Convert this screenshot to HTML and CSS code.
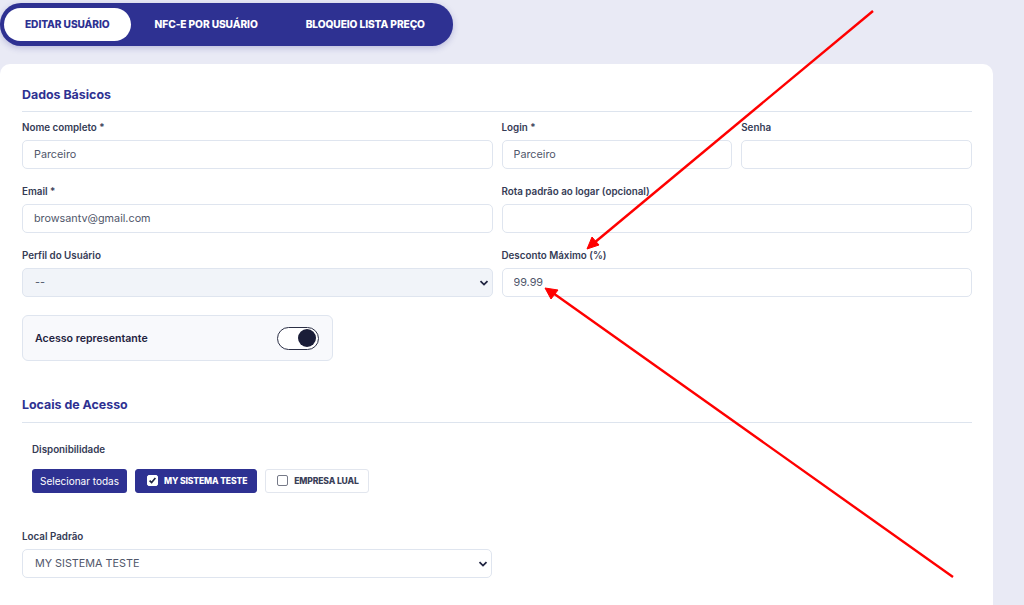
FILE: index.html
```html
<!DOCTYPE html><html lang="pt-BR">
<head>
	<meta charset="utf-8">
	<title>Editar usuário</title>
	<meta name="viewport" content="width=device-width, initial-scale=1.0">
<link rel="stylesheet" href="styles.css">
</head>
<body>
<div class="page">

<div class="tabs">
	<button class="tab active">Editar Usuário</button>
	<button class="tab">NFC-e por usuário</button>
	<button class="tab">Bloqueio lista preço</button>
</div>

<div class="card">
	<h3 class="section">Dados Básicos</h3>

	<div class="grid">
		<div class="field">
			<label>Nome completo *</label>
			<input type="text" value="Parceiro">
		</div>
		<div class="pair">
			<div class="field">
				<label>Login *</label>
				<input type="text" value="Parceiro">
			</div>
			<div class="field">
				<label>Senha</label>
				<input type="password" value="">
			</div>
		</div>

		<div class="field">
			<label>Email *</label>
			<input type="text" value="browsantv@gmail.com">
		</div>
		<div class="field">
			<label>Rota padrão ao logar (opcional)</label>
			<input type="text" value="">
		</div>

		<div class="field">
			<label>Perfil do Usuário</label>
			<div class="select grey">
				<select><option>--</option></select>
				<svg class="chev" width="10" height="8" viewBox="0 0 10 8"><path d="M1.5 2.2 5 5.6 8.5 2.2" fill="none" stroke="#1f2340" stroke-width="1.8"/></svg>
			</div>
		</div>
		<div class="field">
			<label>Desconto Máximo (%)</label>
			<input type="text" value="99.99">
		</div>
	</div>

	<div class="switchbox">
		<span>Acesso representante</span>
		<span class="switch"><span class="knob"></span></span>
	</div>

	<h3 class="section second">Locais de Acesso</h3>

	<div class="locais">
		<label>Disponibilidade</label>
		<div class="chips">
			<button class="btn">Selecionar todas</button>
			<span class="chip on"><span class="box">
				<svg width="9" height="9" viewBox="0 0 9 9"><path d="M1.6 4.6 3.6 6.6 7.4 2" fill="none" stroke="#1f2340" stroke-width="1.6"/></svg>
			</span>MY SISTEMA TESTE</span>
			<span class="chip"><span class="box"></span>EMPRESA LUAL</span>
		</div>
	</div>

	<div class="field half">
		<label>Local Padrão</label>
		<div class="select">
			<select><option>MY SISTEMA TESTE</option></select>
			<svg class="chev" width="10" height="8" viewBox="0 0 10 8"><path d="M1.5 2.2 5 5.6 8.5 2.2" fill="none" stroke="#1f2340" stroke-width="1.8"/></svg>
		</div>
	</div>
</div>

</div>

<!-- setas de destaque sobre o campo de desconto -->
<svg class="marks" width="1024" height="605" viewBox="0 0 1024 605">
	<g stroke="#f00" stroke-width="2.4" fill="#f00">
		<line x1="873" y1="11" x2="594" y2="243"/>
		<polygon points="587,249 592,237 599,245" stroke-width="1"/>
		<line x1="953" y1="577" x2="553" y2="293"/>
		<polygon points="545,288 558,290 551,299" stroke-width="1"/>
	</g>
</svg>
</body>
</html>
```

FILE: styles.css
```css
body {margin:0; background:#e9eaf5; font-family:Inter, "Open Sans", sans-serif; color:#353b55;}
.page {padding:3px 31px 0 0;}

/* abas */
.tabs {
	display:inline-flex;
	background:#2e3192;
	border-radius:21px;
	padding:5px 4px;
	box-shadow:0 2px 6px rgba(46,49,146,.25);
}
.tab {
	border:0;
	background:none;
	color:#fff;
	font:800 10.2px/33px Inter, sans-serif;
	text-transform:uppercase;
	letter-spacing:-.1px;
	padding:0 24px;
	border-radius:17px;
}
.tab.active {background:#fff; color:#2e3192; padding:0 21px;}

/* cartão */
.card {
	margin-top:18px;
	background:#fff;
	border-radius:10px;
	padding:23px 21px 40px 22px;
	min-height:500px;
}
.section {
	margin:0 0 10px;
	padding-bottom:8px;
	border-bottom:1px solid #dde4ee;
	font-size:12.4px;
	font-weight:700;
	color:#2e3192;
	line-height:16px;
}
.section.second {margin-top:36px; padding-bottom:9px; margin-bottom:12px;}

.grid {display:grid; grid-template-columns:1fr 1fr; column-gap:9px; row-gap:17px;}
.pair {display:grid; grid-template-columns:1fr 1fr; gap:9px;}
.field label, .locais label {
	display:block;
	font-size:9.8px;
	font-weight:600;
	line-height:12px;
	margin-bottom:6px;
	color:#353b55;
}
.field input, .field select {
	box-sizing:border-box;
	width:100%;
	height:29px;
	border:1px solid #dfe5ef;
	border-radius:5px;
	padding:0 11px;
	font:400 10.8px Inter, sans-serif;
	color:#50566a;
	background:#fff;
	outline:none;
}
.select {position:relative;}
.select select {appearance:none; -webkit-appearance:none; padding-left:12px;}
.select.grey select {background:#f1f4f9;}
.chev {position:absolute; right:4px; top:11px; pointer-events:none;}
.half {width:470px; margin-top:38px;}

/* acesso representante */
.switchbox {
	display:flex;
	align-items:center;
	justify-content:space-between;
	box-sizing:border-box;
	width:311px;
	height:46px;
	margin-top:18px;
	padding:0 13px 0 12px;
	background:#f8f9fc;
	border:1px solid #dfe5ef;
	border-radius:6px;
	font-size:10.6px;
	font-weight:600;
	color:#1f2340;
}
.switch {
	display:flex;
	justify-content:flex-end;
	align-items:center;
	box-sizing:border-box;
	width:42px;
	height:23px;
	padding:0 2px;
	border:1.3px solid #2b2f45;
	border-radius:12px;
	background:#fff;
}
.knob {width:18px; height:18px; border-radius:50%; background:#1a1d38;}

/* locais */
.locais {padding:9px 10px 0;}
.locais label {margin-bottom:12px;}
.chips {display:flex; gap:8px; align-items:center;}
.btn {
	border:0;
	background:#2e3192;
	color:#fff;
	font:400 10px Inter, sans-serif;
	height:24px;
	padding:0 8px;
	border-radius:3px;
	margin-top:1px;
}
.chip {
	display:inline-flex;
	align-items:center;
	gap:6px;
	box-sizing:border-box;
	height:24px;
	padding:0 9px 0 11px;
	border:1px solid #e2e6ee;
	border-radius:3px;
	font-size:8.6px;
	font-weight:800;
	letter-spacing:-.15px;
	color:#3a4058;
	background:#fff;
}
.chip.on {background:#2e3192; border-color:#2e3192; color:#fff;}
.box {
	display:inline-flex;
	align-items:center;
	justify-content:center;
	width:9px; height:9px;
	border:1px solid #767a88;
	border-radius:2px;
	background:#fff;
}
.chip.on .box {border-color:#fff;}

.marks {position:absolute; left:0; top:0; pointer-events:none;}
```
